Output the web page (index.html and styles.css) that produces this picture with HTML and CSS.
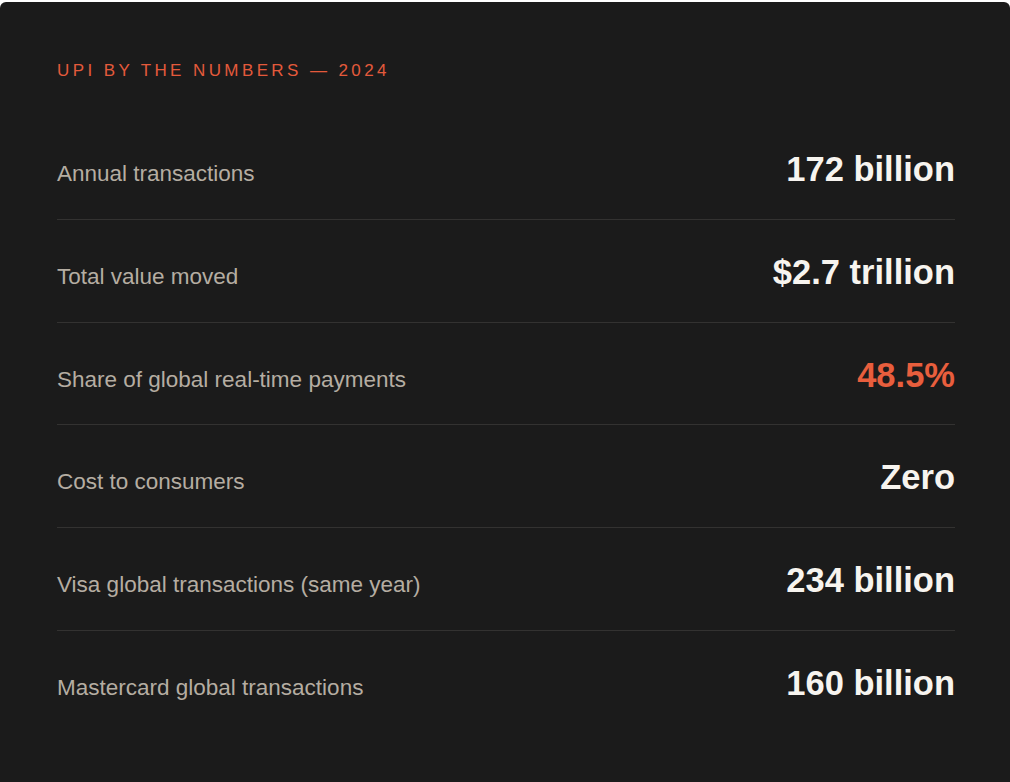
FILE: index.html
```html
<!DOCTYPE html>
<html lang="en">
<head>
<meta charset="utf-8">
<title>UPI by the numbers — 2024</title>
<link rel="stylesheet" href="styles.css">
</head>
<body>
<section class="card">
  <h2 class="eyebrow">UPI by the numbers — 2024</h2>
  <dl class="stats">
    <div class="row"><dt class="label">Annual transactions</dt><dd class="value">172 billion</dd></div>
    <div class="row"><dt class="label">Total value moved</dt><dd class="value">$2.7 trillion</dd></div>
    <div class="row"><dt class="label">Share of global real-time payments</dt><dd class="value accent">48.5%</dd></div>
    <div class="row"><dt class="label">Cost to consumers</dt><dd class="value">Zero</dd></div>
    <div class="row"><dt class="label">Visa global transactions (same year)</dt><dd class="value">234 billion</dd></div>
    <div class="row"><dt class="label">Mastercard global transactions</dt><dd class="value">160 billion</dd></div>
  </dl>
</section>
</body>
</html>
```

FILE: styles.css
```css
html, body {
  margin: 0;
  padding: 0;
  background: #ffffff;
}
body {
  padding-top: 2px;
  font-family: "Liberation Sans", Arial, Helvetica, sans-serif;
}
.card {
  background: #1b1b1b;
  border-radius: 6px;
  padding: 59px 55px 60px 57px;
}
.eyebrow {
  margin: 0 0 36px 0;
  font-size: 17px;
  line-height: 20px;
  font-weight: 400;
  letter-spacing: 3.4px;
  text-transform: uppercase;
  color: #e45a3b;
}
.stats {
  margin: 0;
  display: flex;
  flex-direction: column;
}
.row {
  display: flex;
  justify-content: space-between;
  align-items: baseline;
  padding: 32px 0 28px 0;
  border-top: 1px solid #333231;
}
.row:first-child {
  border-top: none;
}
.label {
  font-size: 22.5px;
  color: #b5ada2;
}
.value {
  margin: 0;
  font-size: 34.5px;
  line-height: 41.8px;
  font-weight: 700;
  color: #f7f4ef;
}
.value.accent {
  color: #e85e3d;
}
```
